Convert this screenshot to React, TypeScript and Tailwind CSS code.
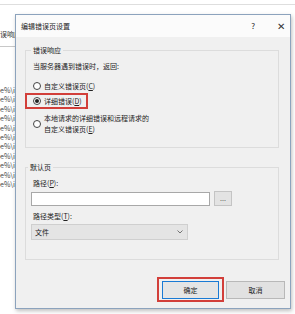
import React from 'react';

const font = { fontFamily: '"Noto Sans CJK SC", "Noto Sans", sans-serif' };

const Radio = ({ checked }: { checked?: boolean }) => (
  <span className="w-[8px] h-[8px] rounded-full border border-[#444] bg-white flex items-center justify-center shrink-0">
    {checked && <span className="w-[4px] h-[4px] rounded-full bg-[#222]" />}
  </span>
);

const rows = Array.from({ length: 11 });

const App = () => {
  return (
    <div
      className="relative w-[295px] h-[314px] bg-white overflow-hidden text-[7px] leading-[10px] text-[#222]"
      style={font}
    >
      {/* window behind the dialog */}
      <div className="h-[5px] border-b border-[#dedede]" />
      <div className="mt-[24px] text-[#333] whitespace-nowrap">误响应</div>
      <div className="mt-[7px] w-[16px] border-b border-[#c8c8c8]" />
      <div className="mt-[39px] flex flex-col text-[#444]">
        {rows.map((_, i) => (
          <div key={i} className="h-[9.4px] leading-[9px] whitespace-nowrap">e%\i</div>
        ))}
      </div>

      {/* dialog */}
      <div className="absolute left-[15px] top-[14px] w-[276px] h-[295px] border border-[#8ca3bd] bg-[#f0f0f0] shadow-[1px_2px_4px_rgba(0,0,0,0.25)] flex flex-col">
        <div className="h-[22px] bg-[#fbfbfb] flex items-center pl-[5px] pr-[5px]">
          <span className="flex-1">编辑错误页设置</span>
          <span className="mr-[22px] text-[8px]">?</span>
          <span className="text-[10px] text-[#333]">✕</span>
        </div>

        <div className="flex-1 pl-[9px] pr-[11px] pt-[8px] flex flex-col">
          <fieldset className="border border-[#dcdcdc] pl-[7px] pb-[13px] h-[103px]">
            <legend className="ml-[-2px] px-[2px] leading-[10px]">错误响应</legend>
            <div className="mt-[6px]">当服务器遇到错误时，返回:</div>
            <div className="mt-[10px] flex items-center gap-[3px]">
              <Radio />
              <span>自定义错误页(<u>C</u>)</span>
            </div>
            <div className="mt-[2px] ml-[-8px] w-[63px] h-[16px] border-2 border-[#d23f3a] pl-[6px] flex items-center gap-[3px]">
              <Radio checked />
              <span>详细错误(<u>D</u>)</span>
            </div>
            <div className="mt-[4px] flex items-center gap-[3px]">
              <Radio />
              <span className="leading-[11px]">
                本地请求的详细错误和远程请求的
                <br />
                自定义错误页(<u>E</u>)
              </span>
            </div>
          </fieldset>

          <fieldset className="mt-[14px] border border-[#dcdcdc] pl-[5px] h-[98px]">
            <legend className="ml-[-3px] px-[2px] leading-[10px]">默认页</legend>
            <div className="mt-[6px] pl-[2px]">路径(<u>P</u>):</div>
            <div className="mt-[3px] flex items-center gap-[4px]">
              <div className="w-[179px] h-[14px] bg-white border border-[#a8a8a8]" />
              <div className="w-[18px] h-[15px] bg-[#e3e3e3] border border-[#c4c4c4] flex items-center justify-center text-[#555] leading-none">
                ...
              </div>
            </div>
            <div className="mt-[5px] pl-[2px]">路径类型(<u>T</u>):</div>
            <div className="mt-[3px] w-[157px] h-[16px] bg-[#e4e4e4] border border-[#cfcfcf] flex items-center pl-[3px] pr-[4px]">
              <span className="flex-1">文件</span>
              <svg width="6" height="4" viewBox="0 0 6 4" fill="none" stroke="#666" strokeWidth="0.9">
                <path d="M0.5 0.5 L3 3 L5.5 0.5" />
              </svg>
            </div>
          </fieldset>

          <div className="mt-[17px] flex justify-end items-center mr-[-6px]">
            <div className="w-[67px] h-[25px] border-2 border-[#d23f3a] flex items-center justify-center">
              <div className="w-[57px] h-[18px] bg-[#e5e5e5] border border-[#1a7ad4] flex items-center justify-center">
                确定
              </div>
            </div>
            <div className="ml-[2px] w-[59px] h-[18px] bg-[#e1e1e1] border border-[#b8b8b8] flex items-center justify-center">
              取消
            </div>
          </div>
        </div>
      </div>
    </div>
  );
};

export default App;
